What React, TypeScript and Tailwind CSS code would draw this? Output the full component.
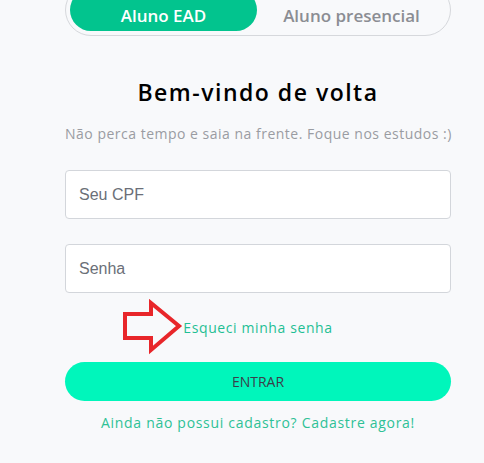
import React from "react";

const heading = { fontFamily: '"Open Sans", "Noto Sans", sans-serif' };
const field = { fontFamily: '"Liberation Sans", Arial, sans-serif' };

const Arrow = () => (
  <svg
    width="64"
    height="56"
    viewBox="0 0 64 56"
    className="absolute left-[-61px] top-[-22px]"
  >
    <polygon
      points="3,15 29,15 29,4 57,27 29,51 29,39 3,39"
      fill="none"
      stroke="#e8262a"
      strokeWidth="4"
      strokeLinejoin="miter"
    />
  </svg>
);

export default function App() {
  return (
    <div className="min-h-[463px] w-[484px] overflow-hidden bg-[#f8f9fb]" style={heading}>
      <div className="ml-[65px] w-[386px] flex flex-col">
        <div className="mt-[-16px] h-[52px] rounded-full border border-[#d6d8dc] p-[4px] flex">
          <button className="w-[187px] rounded-full bg-[#02c48e] text-white text-[17px] font-semibold leading-none pt-[10px]">
            Aluno EAD
          </button>
          <button className="flex-1 text-[#8b8d93] text-[17px] font-semibold leading-none pt-[10px]">
            Aluno presencial
          </button>
        </div>

        <h1 className="mt-[45px] text-center text-[23px] font-semibold text-black leading-none tracking-[1.5px]">
          Bem-vindo de volta
        </h1>
        <p className="mt-[23px] text-center text-[14px] text-[#9a9ca2] leading-none tracking-[0.5px] whitespace-nowrap">
          Não perca tempo e saia na frente. Foque nos estudos :)
        </p>

        <input
          placeholder="Seu CPF"
          className="mt-[29px] h-[49px] rounded-[4px] border border-[#d3d6db] bg-white px-[13px] text-[16px] placeholder:text-[#6b6f78] outline-none"
          style={field}
        />
        <input
          placeholder="Senha"
          type="password"
          className="mt-[25px] h-[49px] rounded-[4px] border border-[#d3d6db] bg-white px-[13px] text-[16px] placeholder:text-[#6b6f78] outline-none"
          style={field}
        />

        <div className="mt-[28px] flex justify-center">
          <a href="#" className="relative text-[14px] text-[#1fbf94] leading-none tracking-[0.6px]">
            <Arrow />
            Esqueci minha senha
          </a>
        </div>

        <button className="mt-[27px] h-[39px] rounded-full bg-[#00f6bb] text-[14px] text-[#3a3f4a]">
          ENTRAR
        </button>

        <a href="#" className="mt-[15px] text-center text-[14px] text-[#2ec196] leading-none tracking-[0.7px]">
          Ainda não possui cadastro? Cadastre agora!
        </a>
      </div>
    </div>
  );
}
